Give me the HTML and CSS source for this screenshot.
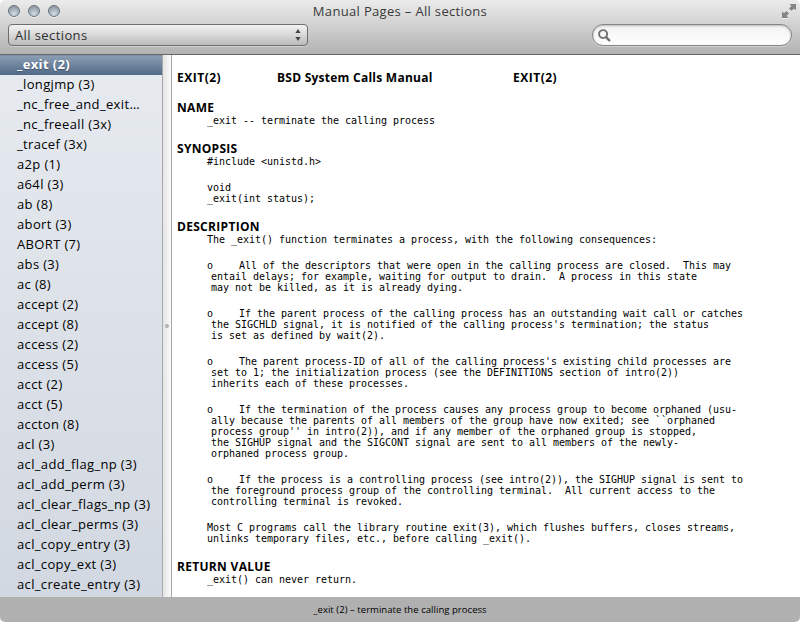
FILE: index.html
```html
<!DOCTYPE html>
<html lang="en">
<head>
<meta charset="utf-8">
<title>Manual Pages – All sections</title>
<link rel="stylesheet" href="styles.css">
</head>
<body>
<div class="window">
  <header class="toolbar">
    <div class="titlebar">
      <div class="lights"><i></i><i></i><i></i></div>
      <h1>Manual Pages – All sections</h1>
      <svg class="expand" width="14" height="14" viewBox="0 0 14 14"><path d="M7.5 0H14v6.5L12 4.7 9.5 7 7 4.5 9.3 2zM0 7.5L2 9.3 4.5 7 7 9.5 4.7 12 6.5 14H0z" fill="#858585"/></svg>
    </div>
    <div class="controls">
      <div class="popup"><span>All sections</span>
        <svg width="6" height="12" viewBox="0 0 6 12"><path d="M3 0l2.6 4H.4zM3 12l2.6-4H.4z" fill="#444"/></svg>
      </div>
      <div class="search">
        <svg width="14" height="14" viewBox="0 0 14 14" fill="none" stroke="#707070"><circle cx="5.1" cy="5.1" r="4" stroke-width="1.9"/><path d="M8.3 8.3l3 3" stroke-width="2.4" stroke-linecap="round"/></svg>
      </div>
    </div>
  </header>
  <main class="split">
    <ul class="list">
      <li class="selected">_exit (2)</li><li>_longjmp (3)</li><li>_nc_free_and_exit…</li><li>_nc_freeall (3x)</li><li>_tracef (3x)</li><li>a2p (1)</li><li>a64l (3)</li><li>ab (8)</li><li>abort (3)</li><li>ABORT (7)</li><li>abs (3)</li><li>ac (8)</li><li>accept (2)</li><li>accept (8)</li><li>access (2)</li><li>access (5)</li><li>acct (2)</li><li>acct (5)</li><li>accton (8)</li><li>acl (3)</li><li>acl_add_flag_np (3)</li><li>acl_add_perm (3)</li><li>acl_clear_flags_np (3)</li><li>acl_clear_perms (3)</li><li>acl_copy_entry (3)</li><li>acl_copy_ext (3)</li><li>acl_create_entry (3)</li>
    </ul>
    <div class="divider"><i></i></div>
    <article class="page">
      <div class="heading"><span>EXIT(2)</span><span class="title">BSD System Calls Manual</span><span>EXIT(2)</span></div>
      <h2>NAME</h2>
      <pre>_exit -- terminate the calling process</pre>
      <h2>SYNOPSIS</h2>
      <pre>#include &lt;unistd.h&gt;</pre>
      <pre>void
_exit(int status);</pre>
      <h2>DESCRIPTION</h2>
      <pre>The _exit() function terminates a process, with the following consequences:</pre>
      <pre class="lead"><i>o</i><span>All of the descriptors that were open in the calling process are closed.  This may</span></pre>
      <pre class="rest">entail delays; for example, waiting for output to drain.  A process in this state
may not be killed, as it is already dying.</pre>
      <pre class="lead"><i>o</i><span>If the parent process of the calling process has an outstanding wait call or catches</span></pre>
      <pre class="rest">the SIGCHLD signal, it is notified of the calling process's termination; the status
is set as defined by wait(2).</pre>
      <pre class="lead"><i>o</i><span>The parent process-ID of all of the calling process's existing child processes are</span></pre>
      <pre class="rest">set to 1; the initialization process (see the DEFINITIONS section of intro(2))
inherits each of these processes.</pre>
      <pre class="lead"><i>o</i><span>If the termination of the process causes any process group to become orphaned (usu-</span></pre>
      <pre class="rest">ally because the parents of all members of the group have now exited; see ``orphaned
process group'' in intro(2)), and if any member of the orphaned group is stopped,
the SIGHUP signal and the SIGCONT signal are sent to all members of the newly-
orphaned process group.</pre>
      <pre class="lead"><i>o</i><span>If the process is a controlling process (see intro(2)), the SIGHUP signal is sent to</span></pre>
      <pre class="rest">the foreground process group of the controlling terminal.  All current access to the
controlling terminal is revoked.</pre>
      <pre>Most C programs call the library routine exit(3), which flushes buffers, closes streams,
unlinks temporary files, etc., before calling _exit().</pre>
      <h2>RETURN VALUE</h2>
      <pre>_exit() can never return.</pre>
    </article>
  </main>
  <footer class="status">_exit (2) – terminate the calling process</footer>
</div>
</body>
</html>
```
FILE: styles.css
```css
* { box-sizing: border-box; }
body { margin: 0; background: #fff; font: 13px/20px "Lucida Grande", "Open Sans", sans-serif; color: #000; }
h1, h2, ul, pre { margin: 0; padding: 0; }
.window { width: 800px; height: 622px; display: flex; flex-direction: column; overflow: hidden; border-radius: 5px; background: #fff; }
.toolbar { height: 55px; flex: none; background: linear-gradient(#ebebeb, #d2d2d2 45%, #b2b2b2); border-bottom: 1px solid #686868; }
.titlebar { height: 24px; padding: 0 4px 0 8px; display: grid; grid-template-columns: 100px 1fr 104px; }
.lights { display: flex; gap: 8px; padding-top: 5px; }
.lights i { width: 12px; height: 12px; border-radius: 50%; border: 1px solid #68727d; background: radial-gradient(circle at 50% 80%, #d3dce4, #a2adb8 55%, #818d99); box-shadow: 0 1px 0 #f0f0f0; }
h1 { font-size: 13px; line-height: 23px; font-weight: 400; color: #3a3a3a; text-align: center; letter-spacing: .33px; }
.expand { justify-self: end; margin-top: 4px; filter: drop-shadow(0 1px 0 #f0f0f0); }
.controls { display: flex; justify-content: space-between; padding: 0 8px; }
.popup { width: 300px; height: 22px; border: 1px solid #6e6e6e; border-radius: 4px; background: linear-gradient(#f2f2f2, #d8d8d8 50%, #bababa); box-shadow: 0 1px 0 #d0d0d0; display: flex; justify-content: space-between; align-items: center; padding: 0 6px; color: #303030; letter-spacing: .4px; }
.search { width: 200px; height: 22px; border-radius: 11px; border: 1px solid #858585; background: linear-gradient(#f2f2f2, #fff); box-shadow: inset 0 1px 2px #bbb, 0 1px 0 #d0d0d0; padding: 4px 5px; display: flex; }
.split { height: 542px; display: flex; }
.list { width: 162px; list-style: none; background: linear-gradient(#e7ebf0, #d2d8e1); }
.list li { height: 20px; padding-left: 17px; white-space: nowrap; letter-spacing: .35px; line-height: 19px; }
.list .selected { color: #fff; font-weight: 700; letter-spacing: .35px; background: linear-gradient(#8a9db2, #516a87); border-top: 1px solid #7c90a7; text-shadow: 0 1px 1px #40536a; line-height: 17px; }
.divider { width: 10px; border: solid #a9a9a9; border-width: 0 1px; background: linear-gradient(90deg, #e4e4e4, #fafafa); display: flex; align-items: center; justify-content: center; }
.divider i { width: 4px; height: 4px; border-radius: 50%; background: #c2c2c2; border: 1px solid #aaa; }
.page { flex: 1; padding: 15px 0 0 5px; overflow: hidden; }
.heading { display: grid; grid-template-columns: 100px 236px 1fr; }
.heading, h2 { font-size: 12px; font-weight: 700; line-height: 15px; height: 15px; white-space: nowrap; letter-spacing: .3px; }
.heading { letter-spacing: .5px; }
.heading .title { letter-spacing: .25px; }
h2 { margin-top: 15px; }
pre { font: 10px/11px "DejaVu Sans Mono", monospace; padding-left: 30px; letter-spacing: -.02px; }
pre + pre { margin-top: 15px; }
.lead { display: flex; }
.lead i { width: 32px; font-style: normal; }
pre.rest { margin-top: 0; padding-left: 34px; }
.status { height: 25px; background: #b0b0b0; font-size: 9.5px; line-height: 26px; text-align: center; letter-spacing: .05px; }
```
